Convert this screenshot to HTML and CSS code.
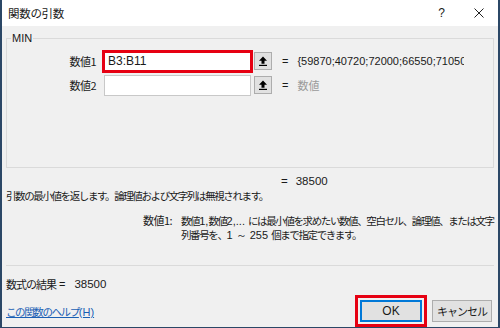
FILE: index.html
```html
<!DOCTYPE html>
<html lang="ja">
  <head>
    <meta charset="UTF-8" />
    <title>関数の引数</title>
    <link rel="stylesheet" href="styles.css">
  </head>
  <body>
    <div class="window">
      <div class="titlebar">
        <span class="title">関数の引数</span>
        <span class="help">?</span>
        <span class="close">
          <svg width="10" height="10" viewBox="0 0 10 10">
            <path d="M0.5 0.5 L9.5 9.5 M9.5 0.5 L0.5 9.5" stroke="#222" stroke-width="1" fill="none" />
          </svg>
        </span>
      </div>

      <div class="content">
        <fieldset class="group">
          <legend>MIN</legend>
          <!-- argument rows -->
          <div class="arg-row">
            <label class="arg-label">数値1</label>
            <div class="arg-input highlight"><span>B3:B11</span></div>
            <button class="ref-btn" type="button">
              <svg width="10" height="10" viewBox="0 0 10 10">
                <path d="M5 0.5 L9 4.8 L6.5 4.8 L6.5 7.8 L3.5 7.8 L3.5 4.8 L1 4.8 Z" fill="#000" />
                <rect x="1" y="8.8" width="8" height="1.2" fill="#000" />
              </svg>
            </button>
            <span class="eq">=</span>
            <span class="arg-value">{59870;40720;72000;66550;71050;61200;55800</span>
          </div>
          <div class="arg-row">
            <label class="arg-label">数値2</label>
            <div class="arg-input"></div>
            <button class="ref-btn" type="button">
              <svg width="10" height="10" viewBox="0 0 10 10">
                <path d="M5 0.5 L9 4.8 L6.5 4.8 L6.5 7.8 L3.5 7.8 L3.5 4.8 L1 4.8 Z" fill="#000" />
                <rect x="1" y="8.8" width="8" height="1.2" fill="#000" />
              </svg>
            </button>
            <span class="eq">=</span>
            <span class="arg-value muted">数値</span>
          </div>
        </fieldset>

        <div class="result-row"><span class="eq">=</span>38500</div>
        <p class="desc">引数の最小値を返します。論理値および文字列は無視されます。</p>
        <div class="arg-desc">
          <span class="arg-name">数値1:</span>
          <span class="arg-text">数値<span class="lat">1,</span>数値<span class="lat">2,... </span>には最小値を求めたい数値、空白セル、論理値、または文字<br>列番号を、<span class="lat">1 ～ 255 </span>個まで指定できます。</span>
        </div>

        <div class="separator"></div>

        <div class="formula">
          <span class="formula-label">数式の結果</span>
          <span class="formula-eq">=</span>
          <span class="formula-value">38500</span>
        </div>

        <div class="footer">
          <a href="#" class="help-link">この関数のヘルプ<span class="lat">(H)</span></a>
          <div class="buttons">
            <div class="ok-wrap"><button type="button" class="btn ok">OK</button></div>
            <button type="button" class="btn cancel">キャンセル</button>
          </div>
        </div>
      </div>
    </div>
  </body>
</html>
```

FILE: styles.css
```css
* {
  box-sizing: border-box;
  margin: 0;
  padding: 0;
}

:root {
  --frame: #2b4766;
  --panel: #f0f0f0;
  --text: #1a1a1a;
  --line: #dadada;
  --red: #e60012;
  --latin: 'Liberation Sans', Arial, sans-serif;
}

body {
  width: 500px;
  height: 328px;
  font-family: 'Noto Sans CJK JP', 'Noto Sans', sans-serif;
  font-size: 11px;
  color: var(--text);
  background: var(--panel);
  overflow: hidden;
}

.lat {
  font-family: var(--latin);
  font-size: 11px;
  letter-spacing: 0;
}

.window {
  width: 500px;
  height: 328px;
  border: 2px solid var(--frame);
  border-top: none;
  border-bottom-width: 1px;
  background: var(--panel);
  display: flex;
  flex-direction: column;
}

.titlebar {
  height: 26px;
  background: #fff;
  display: flex;
  align-items: center;
  padding-left: 6px;
  flex-shrink: 0;
}

.title {
  font-size: 11.5px;
  letter-spacing: -0.3px;
  flex-grow: 1;
}

.help {
  font-family: var(--latin);
  font-size: 12px;
  margin-right: 29px;
}

.close {
  display: flex;
  margin-right: 14px;
}

.content {
  padding: 0 4px;
  flex-grow: 1;
  display: flex;
  flex-direction: column;
}

/* group box */
.group {
  margin-top: 6px;
  height: 136px;
  border: 1px solid var(--line);
  padding: 5px 0 0 0;
}

.group legend {
  margin-left: 4px;
  padding: 0 1px;
  font-family: var(--latin);
  font-size: 11px;
  line-height: 12px;
}

.arg-row {
  display: flex;
  align-items: center;
  height: 24px;
}

.arg-label {
  width: 97px;
  text-align: right;
  padding-right: 8px;
  letter-spacing: -0.5px;
}

.arg-input {
  width: 147px;
  height: 21px;
  background: #fff;
  border: 1px solid #c8c8c8;
  display: flex;
  align-items: center;
  padding-left: 4px;
  font-family: var(--latin);
  font-size: 12px;
}

.arg-input.highlight {
  width: 151px;
  height: 23px;
  margin: 0 -2px;
  border: 3px solid var(--red);
  padding-left: 3px;
}

.ref-btn {
  width: 18px;
  height: 18px;
  margin-left: 3px;
  border: 1px solid #adadad;
  background: #e1e1e1;
  display: flex;
  align-items: center;
  justify-content: center;
}

.eq {
  margin: 0 9px 0 10px;
  font-family: var(--latin);
}

.arg-value {
  font-family: var(--latin);
  font-size: 11px;
  width: 167px;
  overflow: hidden;
  white-space: nowrap;
}

.arg-value.muted {
  font-family: 'Noto Sans CJK JP', sans-serif;
  color: #9a9a9a;
}

/* description */
.result-row {
  margin-top: 6px;
  padding-left: 275px;
  font-family: var(--latin);
  font-size: 11.5px;
  line-height: 14px;
}

.result-row .eq {
  margin: 0 8px 0 0;
}

.desc {
  margin-top: 1px;
  font-size: 10.5px;
  line-height: 14px;
  letter-spacing: -1.4px;
  white-space: nowrap;
}

.arg-desc {
  display: flex;
  margin-top: 11px;
  padding-left: 137px;
  line-height: 13px;
}

.arg-name {
  width: 38px;
  flex-shrink: 0;
  letter-spacing: -0.5px;
}

.arg-text {
  white-space: nowrap;
  font-size: 10.5px;
  letter-spacing: -1.4px;
}

.separator {
  margin-top: 23px;
  border-top: 1px solid var(--line);
}

.formula {
  margin-top: 11px;
  line-height: 14px;
  display: flex;
  align-items: center;
}

.formula-label {
  letter-spacing: -1px;
}

.formula-eq {
  font-family: var(--latin);
  margin: 0 9px 0 3px;
}

.formula-value {
  font-family: var(--latin);
  font-size: 11.5px;
}

/* footer */
.footer {
  display: flex;
  justify-content: space-between;
  align-items: center;
  margin-top: 4px;
}

.help-link {
  color: #1a5fb4;
  text-decoration: underline;
  font-size: 10.5px;
  letter-spacing: -1.4px;
}

.buttons {
  display: flex;
  align-items: center;
  gap: 5px;
  margin-right: 2px;
}

.ok-wrap {
  border: 3px solid var(--red);
  padding: 2px;
}

.btn {
  width: 60px;
  height: 22px;
  font-family: 'Noto Sans CJK JP', sans-serif;
  font-size: 11px;
  color: var(--text);
  background: #e1e1e1;
  border: 1px solid #adadad;
}

.btn.cancel {
  letter-spacing: -1px;
}

.btn.ok {
  width: 62px;
  border: 1px solid #0078d7;
  box-shadow: inset 0 0 0 1px #0078d7;
  font-family: var(--latin);
  font-size: 12px;
}
```
